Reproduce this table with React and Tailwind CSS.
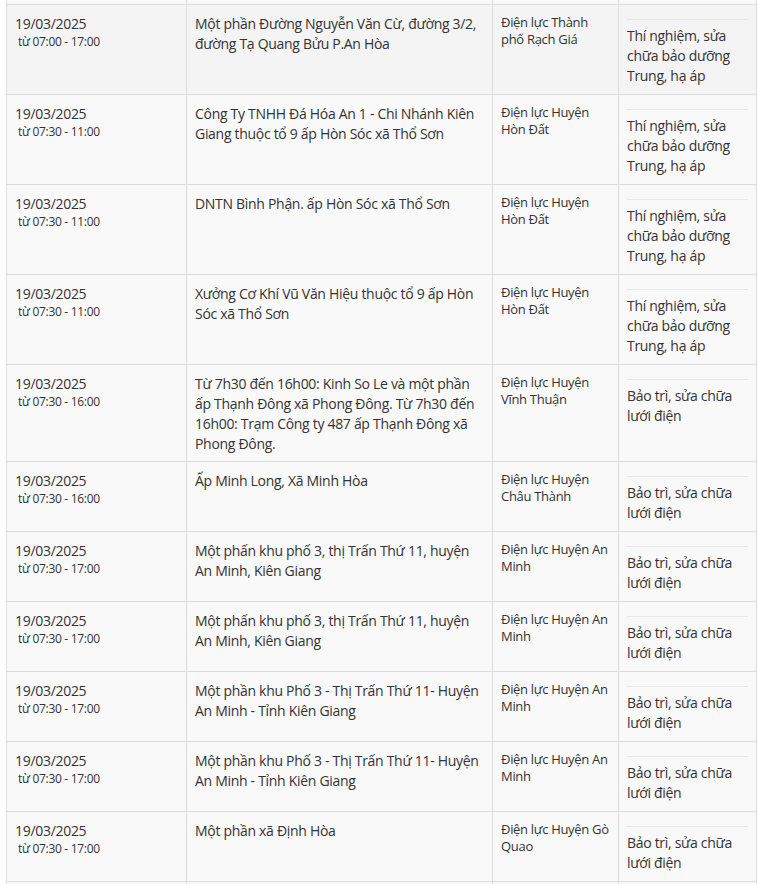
const WORK_A = ['Thí nghiệm, sửa', 'chữa bảo dưỡng', 'Trung, hạ áp'];
const WORK_B = ['Bảo trì, sửa chữa', 'lưới điện'];

const rows = [
  {
    time: '07:00 - 17:00',
    place: ['Một phần Đường Nguyễn Văn Cừ, đường 3/2,', 'đường Tạ Quang Bửu P.An Hòa'],
    unit: ['Điện lực Thành', 'phố Rạch Giá'],
    work: WORK_A,
    active: true,
  },
  {
    time: '07:30 - 11:00',
    place: ['Công Ty TNHH Đá Hóa An 1 - Chi Nhánh Kiên', 'Giang thuộc tổ 9 ấp Hòn Sóc xã Thổ Sơn'],
    unit: ['Điện lực Huyện', 'Hòn Đất'],
    work: WORK_A,
  },
  {
    time: '07:30 - 11:00',
    place: ['DNTN Bình Phận. ấp Hòn Sóc xã Thổ Sơn'],
    unit: ['Điện lực Huyện', 'Hòn Đất'],
    work: WORK_A,
  },
  {
    time: '07:30 - 11:00',
    place: ['Xưởng Cơ Khí Vũ Văn Hiệu thuộc tổ 9 ấp Hòn', 'Sóc xã Thổ Sơn'],
    unit: ['Điện lực Huyện', 'Hòn Đất'],
    work: WORK_A,
  },
  {
    time: '07:30 - 16:00',
    place: [
      'Từ 7h30 đến 16h00: Kinh So Le và một phần',
      'ấp Thạnh Đông xã Phong Đông. Từ 7h30 đến',
      '16h00: Trạm Công ty 487 ấp Thạnh Đông xã',
      'Phong Đông.',
    ],
    unit: ['Điện lực Huyện', 'Vĩnh Thuận'],
    work: WORK_B,
  },
  {
    time: '07:30 - 16:00',
    place: ['Ấp Minh Long, Xã Minh Hòa'],
    unit: ['Điện lực Huyện', 'Châu Thành'],
    work: WORK_B,
  },
  {
    time: '07:30 - 17:00',
    place: ['Một phấn khu phố 3, thị Trấn Thứ 11, huyện', 'An Minh, Kiên Giang'],
    unit: ['Điện lực Huyện An', 'Minh'],
    work: WORK_B,
  },
  {
    time: '07:30 - 17:00',
    place: ['Một phấn khu phố 3, thị Trấn Thứ 11, huyện', 'An Minh, Kiên Giang'],
    unit: ['Điện lực Huyện An', 'Minh'],
    work: WORK_B,
  },
  {
    time: '07:30 - 17:00',
    place: ['Một phần khu Phố 3 - Thị Trấn Thứ 11- Huyện', 'An Minh - Tỉnh Kiên Giang'],
    unit: ['Điện lực Huyện An', 'Minh'],
    work: WORK_B,
  },
  {
    time: '07:30 - 17:00',
    place: ['Một phần khu Phố 3 - Thị Trấn Thứ 11- Huyện', 'An Minh - Tỉnh Kiên Giang'],
    unit: ['Điện lực Huyện An', 'Minh'],
    work: WORK_B,
  },
  {
    time: '07:30 - 17:00',
    place: ['Một phần xã Định Hòa'],
    unit: ['Điện lực Huyện Gò', 'Quao'],
    work: WORK_B,
  },
];

function Lines({ items }) {
  return items.map((line, i) => (
    <span key={i} className="block whitespace-nowrap">
      {line}
    </span>
  ));
}

const cell = 'border border-[#dddddd] px-2 align-top';

export default function App() {
  return (
    <div
      className="h-[884px] overflow-hidden bg-white pl-[6px] tracking-[-0.3px] text-[#333333]"
      style={{ fontFamily: '"Open Sans", "Noto Sans", sans-serif' }}
    >
      <table className="w-[750px] table-fixed border-collapse">
        <colgroup>
          <col className="w-[180px]" />
          <col className="w-[306px]" />
          <col className="w-[126px]" />
          <col className="w-[138px]" />
        </colgroup>
        <tbody>
          <tr className="bg-[#f9f9f9]">
            <td className="h-[4px] border border-t-0 border-[#dddddd] p-0" />
            <td className="h-[4px] border border-t-0 border-[#dddddd] p-0" />
            <td className="h-[4px] border border-t-0 border-[#dddddd] p-0" />
            <td className="h-[4px] border border-t-0 border-[#dddddd] p-0" />
          </tr>
          {rows.map((row, i) => (
            <tr key={i} className={row.active ? 'bg-[#f4f4f4]' : 'bg-[#f9f9f9]'}>
              <td className={`${cell} pt-[9px] pb-[7px]`}>
                <span className="block text-[14px] leading-[20px]">19/03/2025</span>
                <span className="block pl-[3px] text-[12px] leading-[16px]">từ {row.time}</span>
              </td>
              <td className={`${cell} pt-[9px] pb-[7px] text-[14px] leading-[20px]`}>
                <Lines items={row.place} />
              </td>
              <td className={`${cell} pt-[9px] pb-[7px] text-[13px] leading-[17.5px]`}>
                <Lines items={row.unit} />
              </td>
              <td className={`${cell} py-2 text-[14px] leading-[20px]`}>
                <hr className="my-[6px] border-t border-[#e8e8e8]" />
                <Lines items={row.work} />
              </td>
            </tr>
          ))}
          <tr className="bg-[#f9f9f9]">
            <td className="h-[40px] border border-[#dddddd]" />
            <td className="h-[40px] border border-[#dddddd]" />
            <td className="h-[40px] border border-[#dddddd]" />
            <td className="h-[40px] border border-[#dddddd]" />
          </tr>
        </tbody>
      </table>
    </div>
  );
}
